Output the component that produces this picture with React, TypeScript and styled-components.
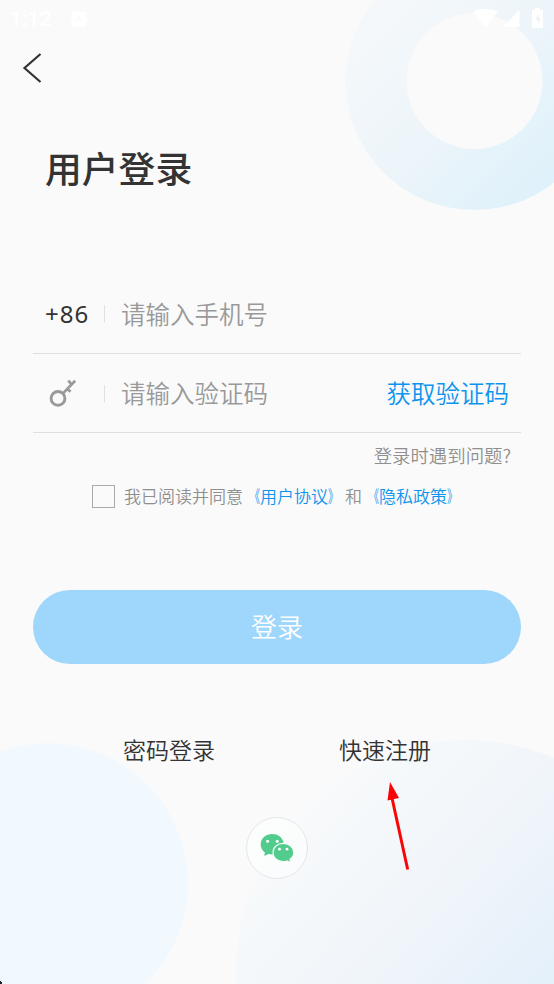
import React from "react";
import styled, { createGlobalStyle } from "styled-components";

const GlobalStyle = createGlobalStyle`
  *, *::before, *::after { box-sizing: border-box; }
  body {
    margin: 0;
    background: #fafafa;
    font-family: "Noto Sans CJK SC", "Noto Sans", sans-serif;
    color: #333;
  }
  button, input { font: inherit; border: 0; padding: 0; background: none; }
`;

const Screen = styled.main`
  position: relative;
  display: flex;
  flex-direction: column;
  width: 554px;
  height: 984px;
  overflow: hidden;
  isolation: isolate;
  background: #fafafa;
`;

const Backdrop = styled.svg`
  position: absolute;
  inset: 0;
  z-index: -1;
`;

const StatusBar = styled.header`
  display: flex;
  align-items: center;
  justify-content: space-between;
  height: 38px;
  padding: 0 9px 0 10px;
  color: #fff;
`;

const StatusGroup = styled.div`
  display: flex;
  align-items: center;
  gap: 20px;
`;

const Clock = styled.span`
  font: 500 21px/38px Roboto, sans-serif;
`;

const BackButton = styled.button`
  display: flex;
  align-items: center;
  height: 60px;
  margin-left: 22px;
  width: 24px;
`;

const Title = styled.h1`
  margin: 41px 0 0 45px;
  height: 56px;
  font-size: 36.8px;
  line-height: 56px;
  font-weight: 500;
`;

const Form = styled.form`
  display: flex;
  flex-direction: column;
  margin: 79px 33px 0;
`;

const Field = styled.div<{ $height: number }>`
  display: flex;
  align-items: center;
  height: ${({ $height }) => $height}px;
  border-bottom: 1px solid #dfdfdf;
`;

const Lead = styled.div`
  display: flex;
  align-items: center;
  width: 72px;
  height: 17px;
  padding-left: 12px;
  border-right: 1px solid #e0e0e0;
  font-family: "Noto Sans", sans-serif;
  font-size: 24px;
  letter-spacing: 1px;
`;

const Input = styled.input`
  flex: 1;
  min-width: 0;
  height: 40px;
  margin-left: 16px;
  font-size: 24.5px;
  font-weight: 350;
  outline: none;
  &::placeholder { color: #999; opacity: 1; }
`;

const CodeInput = styled(Input)`
  margin-bottom: 1px;
`;

const CodeButton = styled.button`
  margin-right: 12px;
  font-size: 24.5px;
  font-weight: 350;
  line-height: 40px;
  color: #0f94ee;
`;

const Help = styled.a`
  align-self: flex-end;
  margin-right: 10px;
  height: 44px;
  font-size: 18.4px;
  font-weight: 350;
  line-height: 44px;
  color: #8f8f8f;
`;

const Agreement = styled.label`
  display: flex;
  align-items: center;
  height: 39px;
  margin-left: 59px;
  padding-bottom: 2px;
  font-size: 17px;
  line-height: 37px;
  font-weight: 350;
  color: #8f8f8f;
  white-space: nowrap;
`;

const Box = styled.span`
  width: 23px;
  height: 23px;
  margin: 2px 9px 0 0;
  border: 1.5px solid #aaa;
`;

const PolicyLink = styled.a`
  color: #0f94ee;
`;

const Bracket = styled.span<{ $side: "left" | "right" }>`
  display: inline-block;
  width: 17px;
  transform: scaleX(0.62);
  transform-origin: ${({ $side }) => ($side === "left" ? "right" : "left")} center;
`;

const Submit = styled.button`
  height: 74px;
  margin-top: 74px;
  padding-bottom: 3px;
  border-radius: 37px;
  background: #9fd6fb;
  color: #fff;
  font-size: 26px;
  font-weight: 350;
  line-height: 71px;
`;

const Alternatives = styled.nav`
  display: flex;
  justify-content: space-between;
  margin: 65px 123px 0;
  height: 41px;
  font-size: 23px;
  font-weight: 350;
  line-height: 40px;
`;

const WechatButton = styled.button`
  display: flex;
  align-items: center;
  justify-content: center;
  align-self: center;
  width: 62px;
  height: 62px;
  margin-top: 47px;
  border: 1px solid #e4e6e8;
  border-radius: 50%;
  background: rgba(252, 253, 254, 0.7);
`;

const Pointer = styled.svg`
  position: absolute;
  left: 380px;
  top: 776px;
`;

const BackdropShapes = () => (
  <Backdrop width="554" height="984" viewBox="0 0 554 984">
    <defs>
      <linearGradient id="ring" gradientUnits="userSpaceOnUse" x1="375" y1="10" x2="545" y2="180">
        <stop offset="0" stopColor="#f5f8fb" />
        <stop offset="0.5" stopColor="#edf5fa" />
        <stop offset="1" stopColor="#dff1fa" />
      </linearGradient>
      <linearGradient id="corner" gradientUnits="userSpaceOnUse" x1="320" y1="790" x2="554" y2="1010">
        <stop offset="0" stopColor="#f8fafb" />
        <stop offset="0.5" stopColor="#f0f5fa" />
        <stop offset="1" stopColor="#e2effa" />
      </linearGradient>
    </defs>
    <circle cx="474.5" cy="81" r="129" fill="url(#ring)" />
    <circle cx="474.5" cy="81" r="68" fill="#fafafa" />
    <circle cx="48" cy="883" r="140" fill="#f1f9ff" />
    <circle cx="466" cy="970" r="230" fill="url(#corner)" />
    <path d="M0 981h1v1h1v2H0z" fill="#16232b" />
  </Backdrop>
);

const NotificationIcon = () => (
  <svg width="16" height="16" viewBox="0 0 16 16">
    <rect x="0.5" y="0.5" width="15" height="15" rx="1.5" fill="#fff" />
    <path d="M5 11l3-6 3 6M6 9h4" fill="none" stroke="#fafafa" strokeWidth="1.4" />
  </svg>
);

const SignalIcons = () => (
  <svg width="72" height="22" viewBox="0 0 72 22" fill="#fff">
    <path d="M0 3.5Q12.5-2 25 3.5L12.5 19.5z" />
    <path d="M46.5 2v17H30z" />
    <path d="M62 0h5v2h3v18H59V2h3z" />
    <path d="M65.5 5.5l-3 6h2.3v5l3-6h-2.3z" fill="#e9f2f8" />
  </svg>
);

const BackIcon = () => (
  <svg width="22" height="32" viewBox="0 0 22 32">
    <path d="M18.5 2L2.5 16l16 14" fill="none" stroke="#333" strokeWidth="2.2" />
  </svg>
);

const KeyIcon = () => (
  <svg width="34" height="32" viewBox="0 0 34 32" fill="none" stroke="#999">
    <circle cx="13" cy="21.4" r="6.9" strokeWidth="2.9" />
    <path d="M18 16.4L30.2 3.8M26.6 7.4l-3.3-3.8M22.3 11.8l3.2 2.9" strokeWidth="2.7" />
  </svg>
);

const WechatIcon = () => (
  <svg width="34" height="30" viewBox="0 0 34 30">
    <path
      d="M12.2 1C5.6 1 .7 5.4.7 11.4c0 3.3 1.6 6.1 4.2 8L4.3 23l4.3-2.1c1.1.3 2.4.5 3.6.5 6.6 0 11.6-4.4 11.6-10S18.8 1 12.2 1z"
      fill="#52cc8c"
    />
    <path
      d="M23.2 10.4c-5.8 0-10.2 3.9-10.2 9.1 0 5.2 4.4 9 10.2 9 1.3 0 2.5-.2 3.6-.6l3.9 1.7-.7-3.3c2.3-1.7 3.8-4 3.8-6.8 0-5.2-4.8-9.1-10.6-9.1z"
      fill="#52cc8c"
      stroke="#fafcfd"
      strokeWidth="1.1"
    />
    <g fill="#fff">
      <circle cx="7.6" cy="8.2" r="1.5" />
      <circle cx="17.2" cy="8.2" r="1.5" />
      <circle cx="19.5" cy="16.2" r="1.4" />
      <circle cx="27" cy="16.2" r="1.4" />
    </g>
  </svg>
);

const Policy = ({ name }: { name: string }) => (
  <PolicyLink>
    <Bracket $side="left">《</Bracket>
    {name}
    <Bracket $side="right">》</Bracket>
  </PolicyLink>
);

const App: React.FC = () => (
  <>
    <GlobalStyle />
    <Screen>
      <BackdropShapes />
      <StatusBar>
        <StatusGroup>
          <Clock>1:12</Clock>
          <NotificationIcon />
        </StatusGroup>
        <SignalIcons />
      </StatusBar>
      <BackButton aria-label="返回">
        <BackIcon />
      </BackButton>
      <Title>用户登录</Title>
      <Form onSubmit={(event) => event.preventDefault()}>
        <Field $height={80}>
          <Lead>+86</Lead>
          <Input type="tel" placeholder="请输入手机号" />
        </Field>
        <Field $height={79}>
          <Lead>
            <KeyIcon />
          </Lead>
          <CodeInput placeholder="请输入验证码" />
          <CodeButton type="button">获取验证码</CodeButton>
        </Field>
        <Help>登录时遇到问题?</Help>
        <Agreement>
          <Box />
          我已阅读并同意
          <Policy name="用户协议" />
          和
          <Policy name="隐私政策" />
        </Agreement>
        <Submit>登录</Submit>
      </Form>
      <Alternatives>
        <a>密码登录</a>
        <a>快速注册</a>
      </Alternatives>
      <WechatButton aria-label="微信登录">
        <WechatIcon />
      </WechatButton>
      <Pointer width="36" height="100" viewBox="0 0 36 100">
        <path d="M12 22L27.7 93.5" stroke="#fa0505" strokeWidth="3" />
        <path d="M10 6l9 16-11.5 2.5z" fill="#fa0505" />
      </Pointer>
    </Screen>
  </>
);

export default App;
